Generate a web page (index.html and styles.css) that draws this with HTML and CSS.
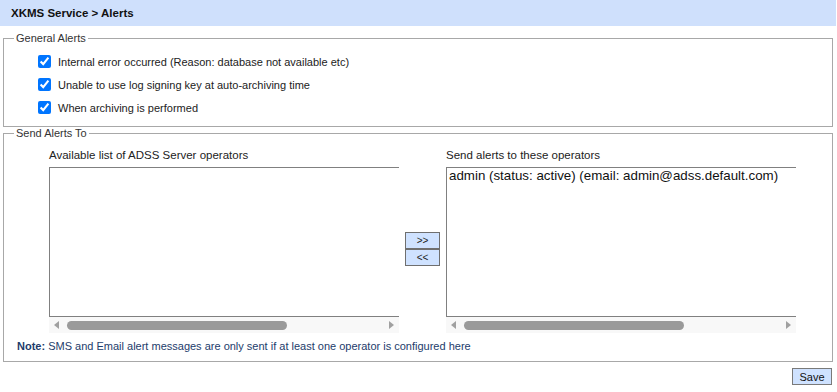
FILE: index.html
```html
<!DOCTYPE html>
<html>
<head>
<meta charset="utf-8">
<link rel="stylesheet" href="styles.css">
</head>
<body>
<div class="header">XKMS Service &gt; Alerts</div>
<fieldset class="box box-general">
  <legend>General Alerts</legend>
  <label class="check-row"><input type="checkbox" checked><span>Internal error occurred (Reason: database not available etc)</span></label>
  <label class="check-row"><input type="checkbox" checked><span>Unable to use log signing key at auto-archiving time</span></label>
  <label class="check-row"><input type="checkbox" checked><span>When archiving is performed</span></label>
</fieldset>
<fieldset class="box box-send">
  <legend>Send Alerts To</legend>
  <div class="lists">
    <div class="list-col">
      <div class="list-label">Available list of ADSS Server operators</div>
      <div class="list-frame">
        <div class="listbox"></div>
        <div class="hscroll">
          <span class="arrow arrow-left"></span>
          <span class="thumb"></span>
          <span class="arrow arrow-right"></span>
        </div>
      </div>
    </div>
    <div class="move-col">
      <button class="move-btn">&gt;&gt;</button>
      <button class="move-btn">&lt;&lt;</button>
    </div>
    <div class="list-col">
      <div class="list-label">Send alerts to these operators</div>
      <div class="list-frame">
        <div class="listbox"><div class="option">admin (status: active) (email: admin@adss.default.com)</div></div>
        <div class="hscroll">
          <span class="arrow arrow-left"></span>
          <span class="thumb"></span>
          <span class="arrow arrow-right"></span>
        </div>
      </div>
    </div>
  </div>
  <div class="note"><b>Note:</b> SMS and Email alert messages are only sent if at least one operator is configured here</div>
</fieldset>
<div class="actions"><button class="save-btn">Save</button></div>
</body>
</html>
```
FILE: styles.css
```css
html, body {
  margin: 0;
  padding: 0;
  background: #fff;
}
body {
  font-family: "Liberation Sans", Arial, sans-serif;
  font-size: 11px;
  color: #222;
  width: 837px;
  height: 392px;
  overflow: hidden;
}
.header {
  height: 26px;
  line-height: 26px;
  background: #cfe0fc;
  padding-left: 11px;
  font-weight: bold;
  font-size: 11.5px;
  color: #111;
  width: 825px;
}
.box {
  border: 1px solid #a8a8a8;
  margin: 0 4px 0 3px;
  padding: 0;
  min-width: 0;
}
.box legend {
  padding: 0 2px;
  margin-left: 10px;
  line-height: 13px;
  font-size: 11px;
  color: #333;
}
.box-general {
  margin-top: 6px;
  padding: 5px 0 7px 0;
}
.check-row {
  display: flex;
  align-items: center;
  height: 23px;
  padding-left: 34px;
}
.check-row input {
  margin: 0 7px 0 0;
  width: 13px;
  height: 13px;
}
.box-send {
  margin-top: 0;
  padding: 0 0 8px 0;
}
.lists {
  display: flex;
  align-items: flex-start;
  margin-top: 8px;
  padding-left: 45px;
}
.list-col {
  width: 350px;
  display: flex;
  flex-direction: column;
}
.list-label {
  height: 14px;
  line-height: 14px;
  font-size: 11.5px;
  margin-bottom: 5px;
}
.list-frame {
  width: 350px;
  overflow: hidden;
}
.listbox {
  width: 500px;
  height: 150px;
  box-sizing: border-box;
  border: 1px solid #808080;
  background: #fff;
}
.option {
  font-size: 13.33px;
  color: #111;
  padding-left: 2px;
  line-height: 16px;
}
.hscroll {
  height: 16px;
  background: #f8f8f8;
  display: flex;
  align-items: center;
}
.arrow {
  width: 0;
  height: 0;
  border-top: 4px solid transparent;
  border-bottom: 4px solid transparent;
}
.arrow-left {
  border-right: 5px solid #a0a0a0;
  margin-left: 5px;
}
.arrow-right {
  border-left: 5px solid #a0a0a0;
  margin-left: auto;
  margin-right: 5px;
}
.thumb {
  width: 220px;
  height: 9px;
  border-radius: 5px;
  background: #9a9a9a;
  margin-left: 8px;
}
.move-col {
  display: flex;
  flex-direction: column;
  padding: 84px 6px 0 6px;
}
.move-btn {
  width: 35px;
  height: 17px;
  margin: 0;
  padding: 0;
  background: #cfe2ff;
  border: 1px solid #6f6f6f;
  font-family: "Liberation Sans", Arial, sans-serif;
  font-size: 10px;
  color: #222;
}
.note {
  margin-top: 6px;
  padding-left: 13px;
  color: #1d3c6b;
  height: 14px;
  line-height: 14px;
}
.actions {
  display: flex;
  justify-content: flex-end;
  padding: 6px 5px 0 0;
}
.save-btn {
  width: 40px;
  height: 17px;
  margin: 0;
  padding: 0;
  background: #cfe2ff;
  border: 1px solid #7a7a7a;
  font-family: "Liberation Sans", Arial, sans-serif;
  font-size: 11px;
  color: #111;
}
```
